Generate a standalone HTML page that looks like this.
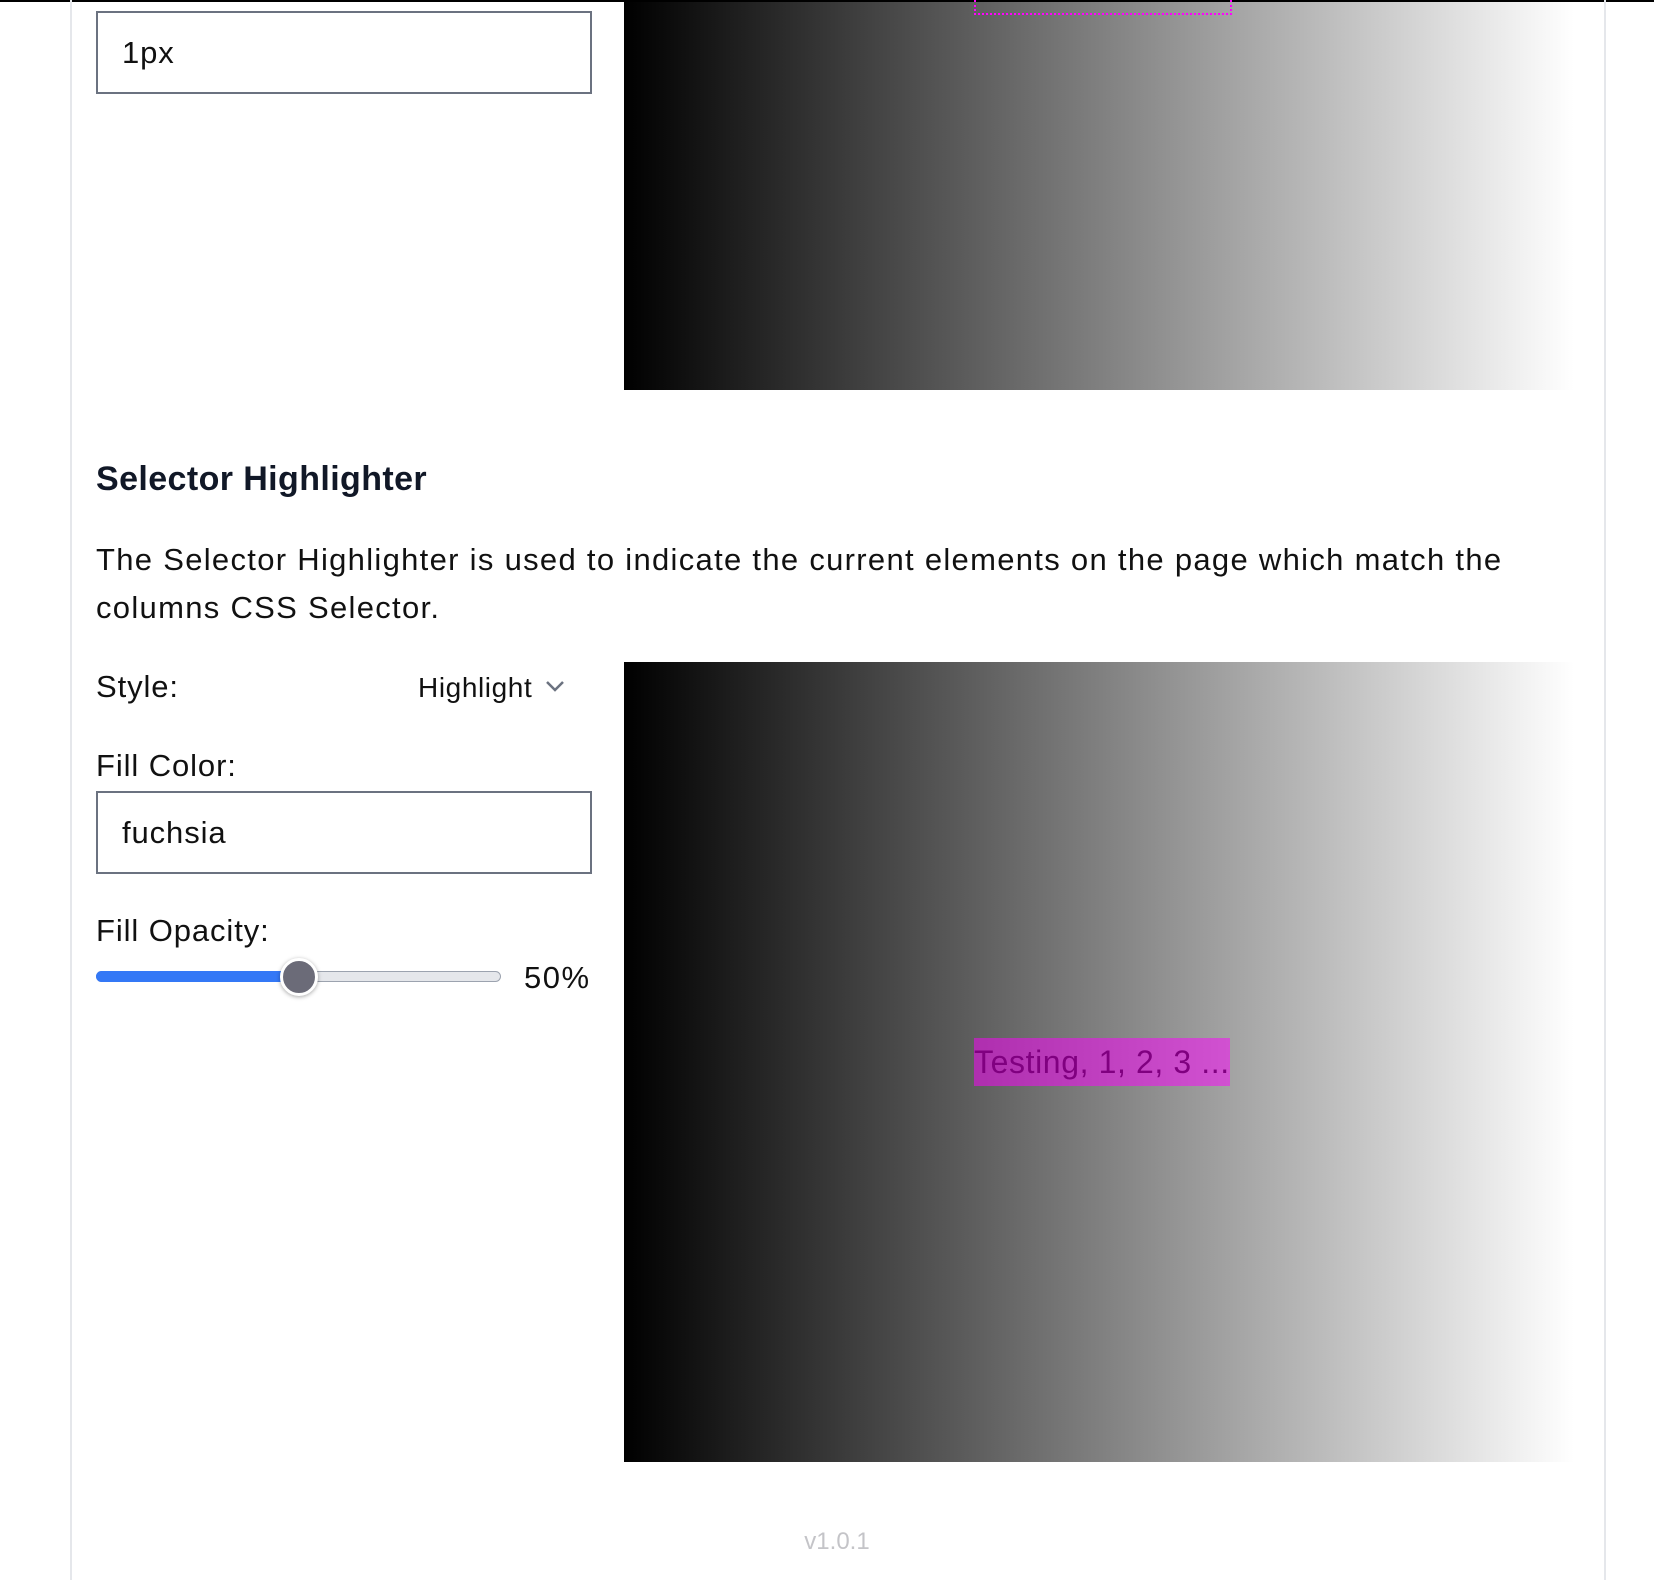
<!DOCTYPE html>
<html><head><meta charset="utf-8"><style>
body{margin:0;width:1662px;height:1580px;background:#fff;position:relative;overflow:hidden;font-family:"Liberation Sans",sans-serif;color:#111;}
.a{position:absolute;}
.grad{background:linear-gradient(to right,#000 0%,#fff 100%);}
.inp{border:2px solid #6b7280;box-sizing:border-box;background:#fff;font-size:31px;letter-spacing:0.9px;padding-left:24px;display:flex;align-items:center;}
.lbl{font-size:31px;line-height:36px;letter-spacing:0.9px;}
</style></head><body>
<div class="a" style="left:0;top:0;width:1654px;height:2px;background:#000"></div>
<div class="a" style="left:70px;top:0;width:2px;height:1580px;background:#e5e7eb"></div>
<div class="a" style="left:1604px;top:0;width:2px;height:1580px;background:#e5e7eb"></div>

<div class="a inp" style="left:96px;top:11px;width:496px;height:83px">1px</div>
<div class="a grad" style="left:624px;top:2px;width:950px;height:388px"></div>
<div class="a" style="left:974px;top:0;width:254px;height:13px;border:2px dotted #f0f;border-top:none"></div>

<div class="a" style="left:96px;top:458px;font-size:34px;line-height:42px;color:#111827;font-weight:bold;letter-spacing:0.4px">Selector Highlighter</div>
<div class="a" style="left:96px;top:536px;width:1460px;font-size:31px;line-height:48px;letter-spacing:1.3px">The Selector Highlighter is used to indicate the current elements on the page which match the columns CSS Selector.</div>

<div class="a lbl" style="left:96px;top:669px">Style:</div>
<div class="a" style="left:418px;top:671px;font-size:28px;line-height:34px;letter-spacing:0.6px">Highlight</div>
<svg class="a" style="left:544px;top:678px" width="22" height="16" viewBox="0 0 22 16"><path d="M3 4l8 8 8-8" fill="none" stroke="#6b7280" stroke-width="2.5"/></svg>

<div class="a lbl" style="left:96px;top:748px">Fill Color:</div>
<div class="a inp" style="left:96px;top:791px;width:496px;height:83px">fuchsia</div>

<div class="a lbl" style="left:96px;top:913px">Fill Opacity:</div>
<div class="a" style="left:96px;top:971px;width:405px;height:11px;border-radius:6px;background:#e5e7eb;border:1px solid #9ca3af;box-sizing:border-box"></div>
<div class="a" style="left:96px;top:971px;width:202px;height:11px;border-radius:6px;background:#3478f6"></div>
<div class="a" style="left:280px;top:958px;width:32px;height:32px;border-radius:50%;background:#6b6b78;border:3px solid #fff;box-shadow:0 1px 4px rgba(0,0,0,.35)"></div>
<div class="a lbl" style="left:524px;top:960px;letter-spacing:1.5px">50%</div>

<div class="a grad" style="left:624px;top:662px;width:950px;height:800px"></div>
<div class="a" style="left:974px;top:1038px;width:256px;height:48px;font-size:32px;line-height:48px;color:#000;white-space:nowrap;overflow:hidden;letter-spacing:0.6px">Testing, 1, 2, 3 ...</div>
<div class="a" style="left:974px;top:1038px;width:256px;height:48px;background:rgba(255,0,255,.5)"></div>

<div class="a" style="left:737px;top:1528px;width:200px;text-align:center;font-size:24px;color:#c4c4c8">v1.0.1</div>
</body></html>
